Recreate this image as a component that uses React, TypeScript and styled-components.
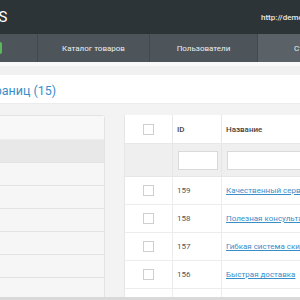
import styled, {createGlobalStyle} from "styled-components";

const GlobalStyle = createGlobalStyle`
    html, body {
        margin: 0;
        padding: 0;
        background: #f3f3f3;
        font-family: Roboto, "Liberation Sans", sans-serif;
    }
`;

const Viewport = styled.div`
    width: 300px;
    height: 297px;
    overflow: hidden;
`;

const Page = styled.div`
    width: 640px;
    margin-left: -80px;
`;

const TopBar = styled.div`
    height: 34px;
    background: #2d3437;
    display: flex;
    align-items: center;
`;

const Logo = styled.div`
    width: 88px;
    text-align: right;
    color: #fff;
    font-size: 15px;
    letter-spacing: 0.5px;
`;

const SiteUrl = styled.div`
    margin-left: auto;
    width: 299px;
    color: #e8e8e8;
    font-size: 8px;
    font-weight: 500;
`;

const Nav = styled.div`
    height: 28px;
    background: #4d555a;
    display: flex;
`;

const NavItem = styled.div<{ $width: number; $active?: boolean }>`
    width: ${p => p.$width}px;
    flex: none;
    display: flex;
    align-items: center;
    justify-content: center;
    gap: 4px;
    color: #eceeef;
    font-size: 8px;
    border-right: 1px solid #434a4f;
    background: ${p => (p.$active ? "#5a6267" : "transparent")};
`;

const Badge = styled.span`
    background: #5cb85c;
    color: #fff;
    font-size: 7px;
    padding: 2px 4px;
    border-radius: 2px;
`;

const SubBar = styled.div`
    height: 9px;
    background: #f1f1f1;
    border-top: 4px solid #f9f9f9;
`;

const HeadingBar = styled.div`
    height: 29px;
    background: #fff;
    display: flex;
    align-items: center;
    padding: 2px 0 0 16px;
    box-sizing: border-box;
    border-bottom: 1px solid #ececec;
`;

const Title = styled.h1`
    margin: 0;
    font-size: 12.5px;
    font-weight: 400;
    color: #3a8ec8;
`;

const Content = styled.div`
    display: flex;
    gap: 19px;
    padding: 11px 0 0 15px;
    align-items: flex-start;
`;

const Sidebar = styled.div`
    width: 168px;
    flex: none;
    border: 1px solid #e3e3e3;
    border-radius: 3px 3px 0 0;
    background: #f6f6f6;
`;

const SideHead = styled.div`
    height: 23px;
    background: #f8f8f8;
    border-bottom: 1px solid #ececec;
`;

const SideRow = styled.div<{ $active?: boolean }>`
    height: 22px;
    border-bottom: 1px solid #e3e3e3;
    background: ${p => (p.$active ? "#e8e8e8" : "#f6f6f6")};
`;

const TablePanel = styled.div`
    flex: 1;
    background: #fff;
    border-left: 1px solid #e6e6e6;
`;

const Table = styled.table`
    border-collapse: collapse;
    width: 100%;
    table-layout: fixed;
`;

const Th = styled.th<{ $width?: number }>`
    ${p => (p.$width ? `width: ${p.$width}px;` : "")}
    height: 28px;
    padding: 0 0 0 4px;
    text-align: left;
    font-size: 8px;
    font-weight: 500;
    color: #444;
    border-right: 1px solid #e8e8e8;
    border-bottom: 1px solid #e8e8e8;
`;

const CheckTh = styled(Th)`
    padding: 0;
    text-align: center;
`;

const FilterCell = styled.td`
    height: 32px;
    background: #efefef;
    padding: 0 0 0 5px;
    border-right: 1px solid #e6e6e6;
    border-bottom: 1px solid #e6e6e6;
`;

const FilterInput = styled.div<{ $width?: number }>`
    width: ${p => (p.$width ? `${p.$width}px` : "100%")};
    height: 17px;
    background: #fff;
    border: 1px solid #d9d9d9;
`;

const Td = styled.td`
    height: 27px;
    padding: 0 0 0 4px;
    font-size: 8px;
    color: #555;
    border-right: 1px solid #ececec;
    border-bottom: 1px solid #ececec;
    white-space: nowrap;
    overflow: hidden;
`;

const CheckCell = styled(Td)`
    padding: 0;
    text-align: center;
`;

const Check = styled.span`
    display: inline-block;
    vertical-align: middle;
    width: 9px;
    height: 9px;
    border: 1px solid #cfcfcf;
    background: #fff;
`;

const Link = styled.a`
    color: #3a8ec8;
    text-decoration: underline;
`;

const ScrollTrack = styled.div`
    width: 300px;
    height: 3px;
    background: #d9d9d9;
`;

const rows = [
    {id: 159, name: "Качественный сервис"},
    {id: 158, name: "Полезная консультация"},
    {id: 157, name: "Гибкая система скидок"},
    {id: 156, name: "Быстрая доставка"},
    {id: 155, name: "Надежная гарантия"},
];

export default function App() {
    return (
        <>
            <GlobalStyle/>
            <Viewport>
                <Page>
                    <TopBar>
                        <Logo>DemoCMS</Logo>
                        <SiteUrl>http://demo.example.ru</SiteUrl>
                    </TopBar>
                    <Nav>
                        <NavItem $width={117}>Главная <Badge>3</Badge></NavItem>
                        <NavItem $width={111}>Каталог товаров</NavItem>
                        <NavItem $width={107}>Пользователи</NavItem>
                        <NavItem $width={110} $active>Страницы</NavItem>
                    </Nav>
                    <SubBar/>
                    <HeadingBar>
                        <Title>Список страниц (15)</Title>
                    </HeadingBar>
                    <Content>
                        <Sidebar>
                            <SideHead/>
                            <SideRow $active/>
                            {[0, 1, 2, 3, 4, 5].map(i => <SideRow key={i}/>)}
                        </Sidebar>
                        <TablePanel>
                            <Table>
                                <thead>
                                <tr>
                                    <CheckTh $width={47}><Check/></CheckTh>
                                    <Th $width={44}>ID</Th>
                                    <Th>Название</Th>
                                </tr>
                                <tr>
                                    <FilterCell/>
                                    <FilterCell><FilterInput $width={38}/></FilterCell>
                                    <FilterCell><FilterInput/></FilterCell>
                                </tr>
                                </thead>
                                <tbody>
                                {rows.map(r => (
                                    <tr key={r.id}>
                                        <CheckCell><Check/></CheckCell>
                                        <Td>{r.id}</Td>
                                        <Td><Link>{r.name}</Link></Td>
                                    </tr>
                                ))}
                                </tbody>
                            </Table>
                        </TablePanel>
                    </Content>
                </Page>
            </Viewport>
            <ScrollTrack/>
        </>
    );
}
